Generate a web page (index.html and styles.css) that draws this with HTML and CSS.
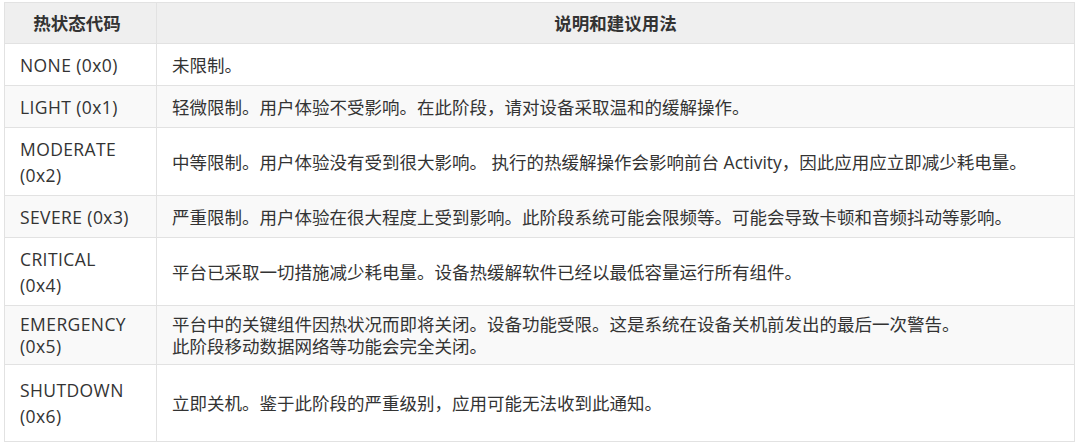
FILE: index.html
```html
<!DOCTYPE html>
<html lang="zh-CN">
<head>
    <meta charset="UTF-8">
    <title>热状态代码</title>
    <link rel="stylesheet" href="styles.css">
</head>
<body>
    <table class="thermal-table">
        <thead>
            <tr>
                <th class="code-col">热状态代码</th>
                <th>说明和建议用法</th>
            </tr>
        </thead>
        <tbody>
            <tr>
                <td class="code">NONE (0x0)</td>
                <td>未限制。</td>
            </tr>
            <tr>
                <td class="code">LIGHT (0x1)</td>
                <td>轻微限制。用户体验不受影响。在此阶段，请对设备采取温和的缓解操作。</td>
            </tr>
            <tr>
                <td class="code">MODERATE (0x2)</td>
                <td>中等限制。用户体验没有受到很大影响。 执行的热缓解操作会影响前台 Activity，因此应用应立即减少耗电量。</td>
            </tr>
            <tr>
                <td class="code">SEVERE (0x3)</td>
                <td>严重限制。用户体验在很大程度上受到影响。此阶段系统可能会限频等。可能会导致卡顿和音频抖动等影响。</td>
            </tr>
            <tr>
                <td class="code">CRITICAL (0x4)</td>
                <td>平台已采取一切措施减少耗电量。设备热缓解软件已经以最低容量运行所有组件。</td>
            </tr>
            <tr class="compact">
                <td class="code">EMERGENCY (0x5)</td>
                <td>平台中的关键组件因热状况而即将关闭。设备功能受限。这是系统在设备关机前发出的最后一次警告。<br>此阶段移动数据网络等功能会完全关闭。</td>
            </tr>
            <tr class="tall">
                <td class="code">SHUTDOWN (0x6)</td>
                <td>立即关机。鉴于此阶段的严重级别，应用可能无法收到此通知。</td>
            </tr>
        </tbody>
    </table>
</body>
</html>
```

FILE: styles.css
```css
body {
    margin: 0;
    padding: 2px 0 0 4px;
    background: #ffffff;
    font-family: "Open Sans", "Noto Sans CJK SC", sans-serif;
    font-size: 17.5px;
    color: #333;
}
.thermal-table {
    width: 1071px;
    border-collapse: collapse;
}
.thermal-table th,
.thermal-table td {
    border: 1px solid #e2e2e2;
    padding: 7.5px 15px;
    line-height: 26px;
    text-align: left;
    vertical-align: middle;
}
.thermal-table th {
    padding-top: 7px;
    padding-bottom: 7px;
    background-color: #efefef;
    text-align: center;
    font-weight: 700;
    color: #333;
}
.thermal-table .code-col {
    width: 114px;
    padding-right: 22px;
}
.thermal-table .code {
    padding-right: 22px;
    letter-spacing: 0.4px;
}
.thermal-table tbody tr:nth-child(even) td {
    background-color: #f9f9f9;
}
.thermal-table .compact td {
    padding-top: 7px;
    padding-bottom: 7px;
    line-height: 22px;
}
.thermal-table .tall td {
    padding-top: 12px;
    padding-bottom: 12px;
}
```
